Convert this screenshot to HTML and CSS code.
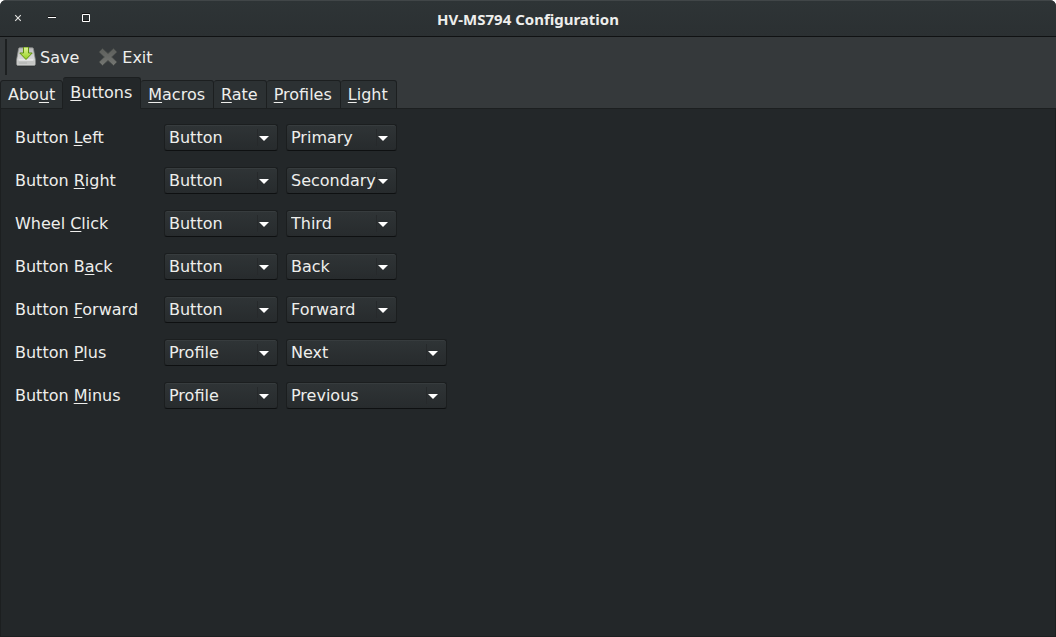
FILE: index.html
```html
<!DOCTYPE html>
<html lang="en">
<head>
<meta charset="utf-8">
<title>HV-MS794 Configuration</title>
<link rel="stylesheet" href="styles.css">
</head>
<body>
<div class="window">
  <header class="titlebar">
    <div class="window-controls">
      <button class="window-button" type="button" aria-label="Close"><svg width="10" height="10" viewBox="0 0 10 10"><path d="M2.2 2.2l5.6 5.6M7.8 2.2L2.2 7.8" stroke="#e4e4e2" stroke-width="1.1" fill="none"/></svg></button>
      <button class="window-button" type="button" aria-label="Minimize"><svg width="10" height="10" viewBox="0 0 10 10"><path d="M1 3h8v1H1z" fill="#111"/><path d="M1 4h8v1H1z" fill="#fff"/></svg></button>
      <button class="window-button" type="button" aria-label="Maximize"><svg width="10" height="10" viewBox="0 0 10 10"><path d="M1 0h8v1H1zM2 8h6v-1H2z" fill="#111"/><path d="M1.500 1.500h7v7h-7z" stroke="#fff" fill="none"/></svg></button>
    </div>
    <h1 class="title">HV-MS794 Configuration</h1>
  </header>

  <div class="toolbar">
    <span class="toolbar-handle"></span>
    <button class="tool" type="button">
      <svg class="tool-icon" width="20" height="20" viewBox="0 0 20 20">
        <defs>
          <linearGradient id="disk" x1="0" y1="0" x2="0" y2="1"><stop offset="0" stop-color="#bcbcbc"/><stop offset="1" stop-color="#e8e8e8"/></linearGradient>
          <linearGradient id="arrow" x1="0" y1="0" x2="0" y2="1"><stop offset="0" stop-color="#e2f49a"/><stop offset="1" stop-color="#96d21e"/></linearGradient>
        </defs>
        <path d="M1.500 18.500h17v1h-17z" fill="#202426" opacity=".6"/>
        <path d="M3.600 .8h12.800q.8 0 1 .8l1.900 11v4.600q0 1.200-1.200 1.200H1.900Q.7 18.400.7 17.200v-4.600l1.900-11q.2-.8 1-.8z" fill="url(#disk)" stroke="#8c8e8c" stroke-width=".8"/>
        <path d="M1.300 13.500h17.400v3.500q0 .8-.8.800H2.100q-.8 0-.8-.8z" fill="#c4c5c3"/>
        <path d="M3 13h14" stroke="#f0f0f0"/>
        <path d="M3 16h8" stroke="#b0b2b0"/>
        <path d="M7.500 0v6H3.800L10 12.500 16.200 6h-3.700V0z" fill="url(#arrow)" stroke="#5f8f10" stroke-width="1"/>
      </svg>
      <span>Save</span>
    </button>
    <button class="tool" type="button">
      <svg class="tool-icon" width="20" height="20" viewBox="0 0 20 20">
        <defs><linearGradient id="cross" x1="0" y1="0" x2="0" y2="1"><stop offset="0" stop-color="#5c5e5b"/><stop offset="1" stop-color="#757773"/></linearGradient></defs>
        <path d="M4.500 1.500l5.500 5 5.500-5L19 5l-5.300 5 5.300 5-3.500 3.500-5.500-5-5.500 5L1 15l5.300-5L1 5z" fill="url(#cross)" stroke="#484b49" stroke-width=".8" stroke-linejoin="round"/>
      </svg>
      <span>Exit</span>
    </button>
  </div>

  <nav class="tabs" role="tablist">
    <button class="tab" type="button" role="tab">Abo<u>u</u>t</button>
    <button class="tab tab-active" type="button" role="tab" aria-selected="true"><u>B</u>uttons</button>
    <button class="tab" type="button" role="tab"><u>M</u>acros</button>
    <button class="tab" type="button" role="tab"><u>R</u>ate</button>
    <button class="tab" type="button" role="tab"><u>P</u>rofiles</button>
    <button class="tab" type="button" role="tab"><u>L</u>ight</button>
  </nav>

  <main class="panel" role="tabpanel">
    <div class="row">
      <label class="row-label" for="left">Button <u>L</u>eft</label>
      <span class="combo combo-kind"><select id="left"><option>Button</option><option>Profile</option></select><svg class="caret" width="10" height="5" viewBox="0 0 10 5"><path d="M0 0h10L5 5z"/></svg></span>
      <span class="combo combo-action"><select aria-label="Button Left action"><option>Primary</option></select><svg class="caret" width="10" height="5" viewBox="0 0 10 5"><path d="M0 0h10L5 5z"/></svg></span>
    </div>
    <div class="row">
      <label class="row-label" for="right">Button <u>R</u>ight</label>
      <span class="combo combo-kind"><select id="right"><option>Button</option><option>Profile</option></select><svg class="caret" width="10" height="5" viewBox="0 0 10 5"><path d="M0 0h10L5 5z"/></svg></span>
      <span class="combo combo-action"><select aria-label="Button Right action"><option>Secondary</option></select><svg class="caret" width="10" height="5" viewBox="0 0 10 5"><path d="M0 0h10L5 5z"/></svg></span>
    </div>
    <div class="row">
      <label class="row-label" for="wheel">Wheel <u>C</u>lick</label>
      <span class="combo combo-kind"><select id="wheel"><option>Button</option><option>Profile</option></select><svg class="caret" width="10" height="5" viewBox="0 0 10 5"><path d="M0 0h10L5 5z"/></svg></span>
      <span class="combo combo-action"><select aria-label="Wheel Click action"><option>Third</option></select><svg class="caret" width="10" height="5" viewBox="0 0 10 5"><path d="M0 0h10L5 5z"/></svg></span>
    </div>
    <div class="row">
      <label class="row-label" for="back">Button B<u>a</u>ck</label>
      <span class="combo combo-kind"><select id="back"><option>Button</option><option>Profile</option></select><svg class="caret" width="10" height="5" viewBox="0 0 10 5"><path d="M0 0h10L5 5z"/></svg></span>
      <span class="combo combo-action"><select aria-label="Button Back action"><option>Back</option></select><svg class="caret" width="10" height="5" viewBox="0 0 10 5"><path d="M0 0h10L5 5z"/></svg></span>
    </div>
    <div class="row">
      <label class="row-label" for="forward">Button <u>F</u>orward</label>
      <span class="combo combo-kind"><select id="forward"><option>Button</option><option>Profile</option></select><svg class="caret" width="10" height="5" viewBox="0 0 10 5"><path d="M0 0h10L5 5z"/></svg></span>
      <span class="combo combo-action"><select aria-label="Button Forward action"><option>Forward</option></select><svg class="caret" width="10" height="5" viewBox="0 0 10 5"><path d="M0 0h10L5 5z"/></svg></span>
    </div>
    <div class="row">
      <label class="row-label" for="plus">Button <u>P</u>lus</label>
      <span class="combo combo-kind"><select id="plus"><option>Profile</option><option>Button</option></select><svg class="caret" width="10" height="5" viewBox="0 0 10 5"><path d="M0 0h10L5 5z"/></svg></span>
      <span class="combo combo-profile"><select aria-label="Button Plus action"><option>Next</option></select><svg class="caret" width="10" height="5" viewBox="0 0 10 5"><path d="M0 0h10L5 5z"/></svg></span>
    </div>
    <div class="row">
      <label class="row-label" for="minus">Button <u>M</u>inus</label>
      <span class="combo combo-kind"><select id="minus"><option>Profile</option><option>Button</option></select><svg class="caret" width="10" height="5" viewBox="0 0 10 5"><path d="M0 0h10L5 5z"/></svg></span>
      <span class="combo combo-profile"><select aria-label="Button Minus action"><option>Previous</option></select><svg class="caret" width="10" height="5" viewBox="0 0 10 5"><path d="M0 0h10L5 5z"/></svg></span>
    </div>
  </main>
</div>
</body>
</html>
```
FILE: styles.css
```css
* { box-sizing: border-box; }

body {
  margin: 0;
  background: #fff;
  color: #eeeeec;
  font: 16px/20px "DejaVu Sans", sans-serif;
}

button, select {
  margin: 0;
  color: inherit;
  font: inherit;
}

u {
  text-decoration-thickness: 1px;
  text-underline-offset: 2px;
  text-decoration-skip-ink: none;
}

.window {
  display: flex;
  flex-direction: column;
  min-height: 100vh;
  background: #35393b;
  border-radius: 6px 6px 0 0;
  overflow: hidden;
}

.titlebar {
  display: grid;
  grid-template-columns: 1fr auto 1fr;
  align-items: center;
  height: 37px;
  background: linear-gradient(#2e3436, #2b3032);
  border-top: 1px solid #414648;
  border-bottom: 1px solid #101213;
}

.window-controls {
  display: flex;
  gap: 14px;
  padding-left: 8px;
}

.window-button {
  display: flex;
  align-items: center;
  justify-content: center;
  width: 20px;
  height: 22px;
  padding: 0 0 2px;
  background: none;
  border: 0;
}

.title {
  margin: 0;
  font: bold 15px/20px "Noto Sans", sans-serif;
}

.toolbar {
  display: flex;
  align-items: center;
  gap: 19px;
  height: 40px;
  padding-left: 5px;
}

.toolbar-handle {
  width: 2px;
  height: 36px;
  margin-right: -10px;
  background: #1d2021;
}

.tool {
  display: flex;
  align-items: center;
  gap: 4px;
  padding: 0;
  background: none;
  border: 0;
}

.tool span { padding-top: 2px; }

.tabs {
  display: flex;
  align-items: flex-end;
  height: 32px;
  box-shadow: inset 0 -1px #1c1f20;
}

.tab {
  height: 29px;
  padding: 0 7px;
  background: #2c3133;
  border: 1px solid #1c1f20;
  border-left-width: 0;
  border-radius: 3px 3px 0 0;
}

.tab:first-child { border-left-width: 1px; }

.tab + .tab { padding-right: 8px; }

.tab-active {
  height: 32px;
  background: #232729;
  border-bottom-color: #232729;
}

.panel {
  display: flex;
  flex: 1;
  flex-direction: column;
  gap: 16px;
  padding: 15px 14px;
  background: #232729;
  border: 1px solid #1c1f20;
  border-top: 0;
}

.row {
  display: flex;
  align-items: center;
  gap: 8px;
}

.row-label { width: 141px; }

.combo {
  position: relative;
  display: flex;
}

.combo-kind { width: 114px; }
.combo-action { width: 111px; }
.combo-profile { width: 161px; }

.combo select {
  width: 100%;
  height: 27px;
  padding: 0 0 0 4px;
  appearance: none;
  background: linear-gradient(#2f3436, #272b2d);
  border: 1px solid #1b1e1f;
  border-bottom-color: #0e1011;
  border-radius: 3px;
  box-shadow: inset 0 1px #373c3e;
}

.combo::after {
  position: absolute;
  top: 5px;
  right: 20px;
  width: 1px;
  height: 17px;
  background: #26292b;
  content: "";
}

.caret {
  position: absolute;
  top: 12px;
  right: 9px;
  fill: #fff;
  pointer-events: none;
}
```
